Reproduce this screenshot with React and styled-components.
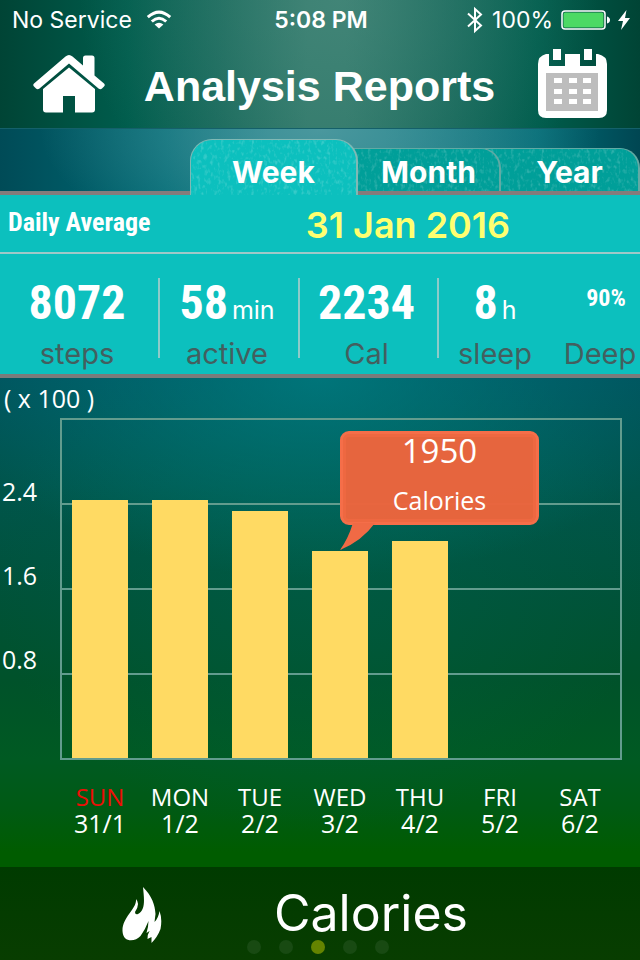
import React, { useState } from "react";
import styled, { createGlobalStyle } from "styled-components";

const ui = `Inter, "Liberation Sans", sans-serif`;
const condensed = `"Roboto Condensed", "Liberation Sans Narrow", "DejaVu Sans Condensed", sans-serif`;
const humanist = `"Open Sans", "Noto Sans", sans-serif`;

const leather = `url("data:image/svg+xml,%3Csvg xmlns='http://www.w3.org/2000/svg' width='170' height='60'%3E%3Cfilter id='l' x='0' y='0' width='100%25' height='100%25'%3E%3CfeTurbulence type='fractalNoise' baseFrequency='.3 .2' numOctaves='2' seed='4'/%3E%3CfeColorMatrix values='0 0 0 0 1 0 0 0 0 1 0 0 0 0 1 3 0 0 0 -1.5'/%3E%3C/filter%3E%3Crect width='170' height='60' filter='url(%23l)' opacity='.18'/%3E%3C/svg%3E")`;

const GlobalStyle = createGlobalStyle`
  *, *::before, *::after { box-sizing: border-box; }
  body { margin: 0; background: #003d00; color: #fff; font-family: ${ui}; }
  button { font: inherit; color: inherit; border: 0; padding: 0; background: none; cursor: pointer; }
  h1, h2, p { margin: 0; font-weight: inherit; }
  svg { display: block; }
`;

const Screen = styled.div`
  min-height: 100vh;
  display: flex;
  flex-direction: column;
  overflow: hidden;
`;

const Header = styled.header`
  height: 129px;
  border-bottom: 1px solid #14606a;
  background:
    radial-gradient(ellipse 260px 240px at 53% 0, rgba(90, 150, 138, 0.42), transparent),
    linear-gradient(90deg, #004435, #005d4d 20%, #16685a 34%, #2f7869 48%, #2f7869 54%, #16685a 70%, #005d4d 84%, #004435);
`;

const StatusBar = styled.div`
  display: grid;
  grid-template-columns: 1fr auto 1fr;
  align-items: center;
  height: 40px;
  padding: 0 10px 0 12px;
  font-size: 23px;
  line-height: 40px;
`;

const StatusGroup = styled.div`
  display: flex;
  align-items: center;
  justify-content: ${(p) => (p.$end ? "flex-end" : "flex-start")};
  gap: ${(p) => (p.$end ? 8 : 14)}px;
`;

const Clock = styled.time`
  font-weight: 600;
`;

const TitleBar = styled.div`
  display: flex;
  align-items: center;
  justify-content: space-between;
  padding: 6px 32px 0 33px;
`;

const Title = styled.h1`
  padding: 5px 4px 0 0;
  font: bold 43px/71px "Liberation Sans", Arial, sans-serif;
`;

const TabBar = styled.div`
  display: grid;
  grid-template-columns: 190fr 168fr 143fr 139fr;
  align-items: end;
  height: 66px;
  background:
    linear-gradient(#857b7b, #857b7b) 0 100% / 100% 4px no-repeat,
    radial-gradient(ellipse 280px 130px at 50% 0, rgba(110, 170, 175, 0.6), transparent),
    linear-gradient(90deg, #004b57, #006b75 26%, #147c84 42%, #147c84 60%, #006b75 84%, #004652);
`;

const Tab = styled.button`
  grid-column: ${(p) => p.$column};
  position: relative;
  z-index: ${(p) => (p.$active ? 3 : 5 - p.$column)};
  display: flex;
  align-items: center;
  justify-content: center;
  height: ${(p) => (p.$active ? 56 : 43)}px;
  margin: 0 0 ${(p) => (p.$active ? 0 : 4)}px ${(p) => (p.$active ? 0 : -20)}px;
  padding: ${(p) => (p.$active ? "12px 0 4px" : "4px 0 0 20px")};
  border: solid ${(p) => (p.$active ? "#80b9b5" : "#62aaa4")};
  border-width: 1px 2px 0 ${(p) => (p.$active ? 1 : 0)}px;
  border-radius: ${(p) => (p.$active ? "22px 22px 0 0" : "0 20px 0 0")};
  background: ${leather}, ${(p) => (p.$active ? "#0cc0be" : "#009f99")};
  font-size: 30px;
  font-weight: 700;
  line-height: 40px;
`;

const Summary = styled.section`
  background: #0cc0be;
  border-bottom: 4px solid #7b7b7b;
`;

const SummaryHead = styled.div`
  display: grid;
  grid-template-columns: 176fr 448fr;
  align-items: center;
  height: 59px;
  padding: 0 8px;
  border-bottom: 2px solid #a0c8c8;
`;

const SummaryTitle = styled.h2`
  font: bold 26px/52px ${condensed};
  padding-bottom: 4px;
  white-space: nowrap;
`;

const SummaryDate = styled.time`
  padding-top: 2px;
  text-align: center;
  color: #ffff70;
  font-size: 36px;
  font-weight: 600;
`;

const Stats = styled.div`
  display: grid;
  grid-template-columns: 160fr 140fr 139fr 201fr;
  padding: 24px 0 16px;
`;

const StatCell = styled.div`
  display: grid;
  grid-template-columns: ${(p) => (p.$split ? "112fr 80fr" : "1fr")};
  column-gap: 9px;
  height: 80px;
  padding-right: ${(p) => (p.$pull ? 4 : 0)}px;
  border-right: ${(p) => (p.$split ? 0 : 2)}px solid #8dcbc9;
`;

const Stat = styled.div`
  display: flex;
  flex-direction: column;
  align-items: center;
  white-space: nowrap;
`;

const StatValue = styled.div`
  height: 60px;
  padding-left: ${(p) => (p.$small ? 12 : 0)}px;
  font: bold ${(p) => (p.$small ? 24 : 48)}px/${(p) => (p.$small ? 40 : 50)}px ${condensed};
`;

const Unit = styled.span`
  margin-left: 4px;
  font: 25px/30px ${ui};
`;

const StatLabel = styled.div`
  color: #435f5f;
  font-size: 29px;
  line-height: 32px;
`;

const ChartPanel = styled.main`
  flex: 1;
  font-family: ${humanist};
  font-size: 25px;
  line-height: 26px;
  background:
    radial-gradient(ellipse 380px 200px at 50% 0, rgba(0, 134, 138, 0.65), transparent),
    radial-gradient(ellipse 330px 260px at 50% 40%, rgba(0, 104, 82, 0.35), transparent),
    linear-gradient(#00525c, #00554c 22%, #005238 45%, #00522a 62%, #005a22 78%, #005a14 88%, #005c00 97%);
`;

const ScaleNote = styled.p`
  height: 40px;
  padding: 7px 4px 0;
`;

const ChartGrid = styled.div`
  display: grid;
  grid-template-columns: 60px 1fr;
  padding-right: 18px;
`;

const Scale = styled.div`
  display: grid;
  grid-template-rows: repeat(3, 84px);
  align-items: end;
  padding: 2px 0 0 2px;
`;

const Plot = styled.div`
  display: grid;
  grid-template-columns: repeat(7, 1fr);
  height: 342px;
  padding: 0 2px 2px 0;
  background: linear-gradient(#629c8e 2px, transparent 0) content-box 0 0 / 100% 25%;
  background-origin: content-box;
  box-shadow: inset 0 0 0 2px #629c8e;
`;

const Slot = styled.div`
  display: flex;
  align-items: flex-end;
  justify-content: center;
`;

const Bar = styled.div`
  position: relative;
  width: 70%;
  background: #ffda63;
`;

const Callout = styled.div`
  position: absolute;
  z-index: 2;
  left: 50%;
  bottom: 100%;
  width: 199px;
  padding-bottom: 26px;
  text-align: center;
`;

const CalloutBody = styled.div`
  height: 94px;
  border: 3px solid #f56e49;
  border-radius: 9px;
  background: rgba(235, 101, 61, 0.98);
  box-shadow: inset 0 0 0 3px #ee6841;
`;

const CalloutValue = styled.div`
  font-size: 33px;
  line-height: 34px;
`;

const CalloutUnit = styled.div`
  padding-top: 18px;
  font-size: 25px;
  line-height: 28px;
`;

const CalloutTail = styled.svg`
  position: absolute;
  left: 0;
  bottom: 0;
`;

const Days = styled.div`
  grid-column: 2;
  display: grid;
  grid-template-columns: repeat(7, 1fr);
  padding: 24px 2px 30px 0;
  text-align: center;
`;

const DayName = styled.div`
  color: ${(p) => (p.$holiday ? "#ee0d05" : "#fff")};
  font-size: 24px;
`;

const Footer = styled.footer`
  height: 93px;
  background: linear-gradient(#003b00, #083d00);
`;

const FooterRow = styled.div`
  display: flex;
  align-items: center;
  justify-content: center;
  gap: 112px;
  height: 73px;
  padding: 22px 50px 0 0;
`;

const FooterTitle = styled.h2`
  padding-bottom: 4px;
  font-size: 50px;
  line-height: 54px;
`;

const Pager = styled.nav`
  display: flex;
  justify-content: center;
  gap: 18px;
  padding-right: 4px;
`;

const Dot = styled.button`
  width: 14px;
  height: 14px;
  border-radius: 50%;
  background: ${(p) => (p.$active ? "#648400" : "#184a12")};
`;

const WifiIcon = () => (
  <svg width="26" height="20" viewBox="0 0 26 20" fill="none" stroke="#fff" strokeWidth="3">
    <path d="M1.8 7.2Q13-3 24.2 7.2" />
    <path d="M5.8 11.5Q13 5 20.2 11.5" />
    <path d="M8.6 14.6Q13 10.8 17.4 14.6L13 18.6Z" fill="#fff" stroke="none" />
  </svg>
);

const BluetoothIcon = () => (
  <svg width="18" height="28" viewBox="0 0 18 28" fill="none" stroke="#fff" strokeWidth="2">
    <path d="M2 7.5 15 19.5 9 25V3l6 5.500L2 20.500" />
  </svg>
);

const BatteryIcon = () => (
  <svg width="49" height="20" viewBox="0 0 49 20">
    <rect x="1" y="1" width="43" height="18" rx="3" fill="none" stroke="#fff" strokeWidth="1.500" />
    <rect x="2.500" y="2.500" width="40" height="15" rx="1.500" fill="#4cd964" />
    <path d="M46 6.500q3 1 3 3.500t-3 3.500z" fill="#fff" />
  </svg>
);

const BoltIcon = () => (
  <svg width="12" height="20" viewBox="0 0 12 20" fill="#fff">
    <path d="M8.500 0 0 11h5L3 20l9-12H7z" />
  </svg>
);

const HomeIcon = () => (
  <svg width="72" height="58" viewBox="0 0 72 58" fill="#fff">
    <path d="M1 28.500 32.500 1.500q3.500-3 7 0L50 10.500V3q0-2.500 2.500-2.500H59q2.500 0 2.500 2.500v17.500L71 28.500q1.500 1.500 0 3l-2 2q-1.500 1.500-3.500 0L36 8.500 6.500 33.500q-2 1.500-3.500 0l-2-2q-1.500-1.500 0-3z" />
    <path d="M36 12.500 62 34v20.500q0 3-3 3H42V41H30v16.500H13q-3 0-3-3V34z" />
  </svg>
);

const CalendarIcon = () => (
  <svg width="70" height="70" viewBox="0 0 70 70">
    <path fill="#fff" d="M8 5h3v12h16V5h15v12h16V5h2q9 2 9 10v46q0 8-8 8H8q-8 0-8-8V15Q0 7 8 5z" />
    <path fill="#fff" d="M15 0h8v11h-8zM46 0h8v11h-8z" />
    <path fill="#bdbdbd" d="M8 24h52v38H8z" />
    <path fill="#fff" d="M16 29h8v5h-8zM31 29h8v5h-8zM45 29h8v5h-8zM16 40h8v5h-8zM31 40h8v5h-8zM45 40h8v5h-8zM16 50h8v5h-8zM31 50h8v5h-8zM45 50h8v5h-8z" />
  </svg>
);

const FlameIcon = () => (
  <svg width="40" height="56" viewBox="0 0 40 56" fill="#fff">
    <path d="M21 0C30 9 33 18 33.500 27l-1 8q4-4 5-11 3 8 1 18-3 8-9 14l0-6-4 2q0-5 2-8l-3 2q2-7 2-12-3 8-8 15C13 55 1 56 .5 44 0 30 15 22 14 12q4.500 5-1 13 0 3 3 2C24 23 22 11 21 0z" />
  </svg>
);

const tabs = ["Week", "Month", "Year"];
const scale = ["2.4", "1.6", "0.8"];
const maxValue = 3.2;
const days = [
  { name: "SUN", date: "31/1", value: 2.43, holiday: true },
  { name: "MON", date: "1/2", value: 2.43 },
  { name: "TUE", date: "2/2", value: 2.325 },
  { name: "WED", date: "3/2", value: 1.95, calories: 1950 },
  { name: "THU", date: "4/2", value: 2.04 },
  { name: "FRI", date: "5/2", value: 0 },
  { name: "SAT", date: "6/2", value: 0 },
];
const pages = ["Steps", "Active time", "Calories", "Sleep", "Weight"];

export default function App() {
  const [tab, setTab] = useState("Week");
  return (
    <Screen>
      <GlobalStyle />
      <Header>
        <StatusBar>
          <StatusGroup>No Service<WifiIcon /></StatusGroup>
          <Clock>5:08 PM</Clock>
          <StatusGroup $end><BluetoothIcon /><span>100%</span><BatteryIcon /><BoltIcon /></StatusGroup>
        </StatusBar>
        <TitleBar>
          <button aria-label="Home"><HomeIcon /></button>
          <Title>Analysis Reports</Title>
          <button aria-label="Calendar"><CalendarIcon /></button>
        </TitleBar>
      </Header>

      <TabBar role="tablist">
        {tabs.map((name, i) => (
          <Tab key={name} role="tab" aria-selected={tab === name} $active={tab === name} $column={i + 2} onClick={() => setTab(name)}>
            {name}
          </Tab>
        ))}
      </TabBar>

      <Summary>
        <SummaryHead>
          <SummaryTitle>Daily Average</SummaryTitle>
          <SummaryDate>31 Jan 2016</SummaryDate>
        </SummaryHead>
        <Stats>
          <StatCell $pull><Stat><StatValue>8072</StatValue><StatLabel>steps</StatLabel></Stat></StatCell>
          <StatCell $pull><Stat><StatValue>58<Unit>min</Unit></StatValue><StatLabel>active</StatLabel></Stat></StatCell>
          <StatCell $pull><Stat><StatValue>2234</StatValue><StatLabel>Cal</StatLabel></Stat></StatCell>
          <StatCell $split>
            <Stat><StatValue>8<Unit>h</Unit></StatValue><StatLabel>sleep</StatLabel></Stat>
            <Stat><StatValue $small>90%</StatValue><StatLabel>Deep</StatLabel></Stat>
          </StatCell>
        </Stats>
      </Summary>

      <ChartPanel>
        <ScaleNote>( x 100 )</ScaleNote>
        <ChartGrid>
          <Scale>
            {scale.map((v) => <span key={v}>{v}</span>)}
          </Scale>
          <Plot>
            {days.map((d) => (
              <Slot key={d.name}>
                <Bar style={{ height: `${(d.value / maxValue) * 100}%` }}>
                  {d.calories && (
                    <Callout>
                      <CalloutBody>
                        <CalloutValue>{d.calories}</CalloutValue>
                        <CalloutUnit>Calories</CalloutUnit>
                      </CalloutBody>
                      <CalloutTail width="36" height="28" viewBox="0 0 36 28" fill="#f06a45">
                        <path d="M13 0Q8 16 0 27 22 18 35 0z" />
                      </CalloutTail>
                    </Callout>
                  )}
                </Bar>
              </Slot>
            ))}
          </Plot>
          <Days>
            {days.map((d) => (
              <div key={d.name}>
                <DayName $holiday={d.holiday}>{d.name}</DayName>
                <div>{d.date}</div>
              </div>
            ))}
          </Days>
        </ChartGrid>
      </ChartPanel>

      <Footer>
        <FooterRow>
          <FlameIcon />
          <FooterTitle>Calories</FooterTitle>
        </FooterRow>
        <Pager aria-label="Reports">
          {pages.map((p) => <Dot key={p} aria-label={p} $active={p === "Calories"} />)}
        </Pager>
      </Footer>
    </Screen>
  );
}
